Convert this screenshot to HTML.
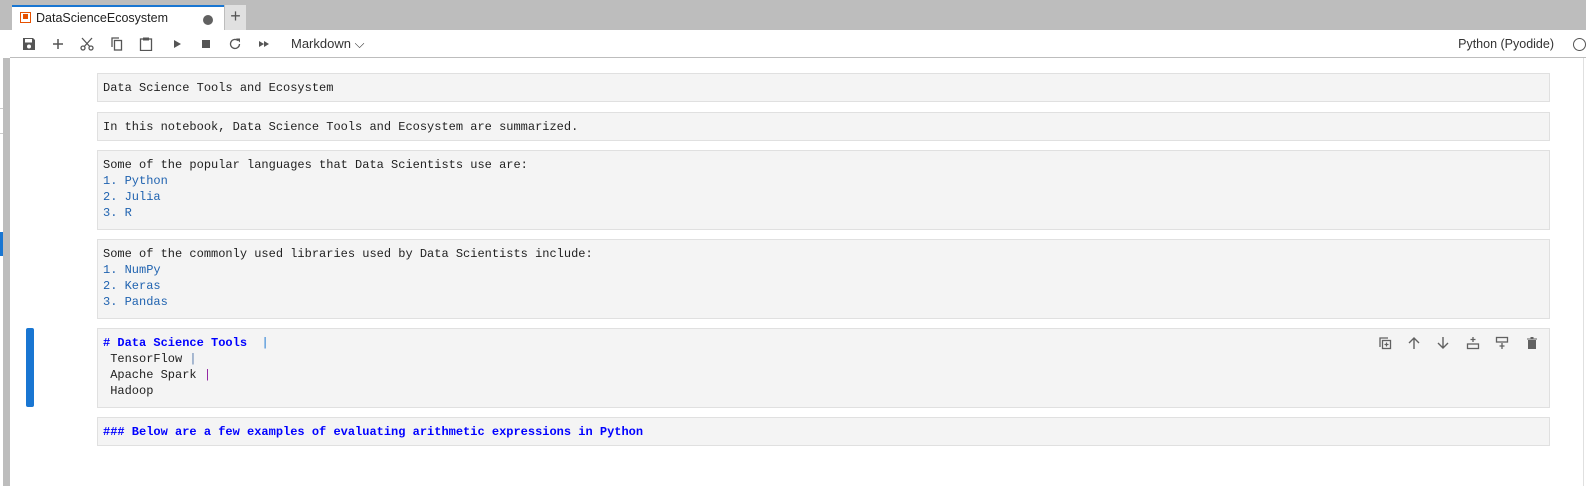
<!DOCTYPE html>
<html><head><style>
*{margin:0;padding:0;box-sizing:border-box}
body{width:1586px;height:486px;background:#fff;position:relative;overflow:hidden;font-family:"Liberation Sans",sans-serif}
.top{position:absolute;left:0;top:0;width:1586px;height:30px;background:#bdbdbd}
.tab{position:absolute;left:12px;top:5px;width:212px;height:25px;background:#fff;border-top:2px solid #1976d2;font-size:12.5px;color:#222}
.tab .t{position:absolute;left:24px;top:4px}
.tab .ic{position:absolute;left:8px;top:5px;width:11px;height:11px;border:1.5px solid #e65100}
.tab .ic:after{content:"";position:absolute;left:1.5px;top:1px;width:5px;height:5px;background:#e65100}
.tab .dot{position:absolute;left:191px;top:8px;width:10px;height:10px;border-radius:50%;background:#616161}
.plus{position:absolute;left:225px;top:5px;width:21px;height:25px;background:#e0e0e0;color:#555;font-size:18px;text-align:center;line-height:22px}
.tb{position:absolute;left:10px;top:30px;width:1576px;height:28px;background:#fff;border-bottom:1px solid #bdbdbd}
.tb svg{position:absolute;top:7px}
.md{position:absolute;left:281px;top:6px;font-size:13px;color:#333}
.ker{position:absolute;right:32px;top:7px;font-size:12.5px;color:#333}
.circ{position:absolute;right:0;top:8px;width:13px;height:13px;border:1.3px solid #555;border-radius:50%}
.lg{position:absolute;left:3px;top:58px;width:7px;height:428px;background:#bdbdbd}
.ll{position:absolute;left:0;width:3px;height:1px;background:#ccc}
.cell{position:absolute;left:97px;width:1453px;background:#f4f4f4;border:1px solid #e0e0e0;font-family:"Liberation Mono",monospace;font-size:12px;line-height:16px;color:#222;padding:6px 5px;white-space:pre}
.b{color:#2063b0}
.h{color:#0000ff;font-weight:bold}
.bar{position:absolute;left:26px;top:328px;width:8px;height:79px;background:#1976d2;border-radius:2px}
.ac svg{position:absolute;top:336px}
</style></head><body>
<div class="top"></div>
<div class="tab"><div class="ic"></div><span class="t">DataScienceEcosystem</span><div class="dot"></div></div>
<div class="plus">+</div>
<div class="tb">
<svg style="left:12px" width="14" height="14" viewBox="0 0 14 14"><path d="M1 1h10l2 2v10H1z" fill="#555"/><rect x="3" y="2" width="7" height="3.5" fill="#fff"/><circle cx="7" cy="9.5" r="2" fill="#fff"/></svg>
<svg style="left:41px" width="14" height="14" viewBox="0 0 14 14"><path d="M7 2v10M2 7h10" stroke="#555" stroke-width="1.5"/></svg>
<svg style="left:70px" width="14" height="14" viewBox="0 0 14 14"><circle cx="3" cy="11" r="2" fill="none" stroke="#555" stroke-width="1.3"/><circle cx="11" cy="11" r="2" fill="none" stroke="#555" stroke-width="1.3"/><path d="M4.3 9.5L12 1M9.7 9.5L2 1" stroke="#555" stroke-width="1.3"/></svg>
<svg style="left:100px" width="14" height="14" viewBox="0 0 14 14"><path d="M2 10V1h7" fill="none" stroke="#555" stroke-width="1.3"/><rect x="4.5" y="3.5" width="7" height="9.5" fill="none" stroke="#555" stroke-width="1.3"/></svg>
<svg style="left:129px" width="14" height="14" viewBox="0 0 14 14"><rect x="1.5" y="2" width="11" height="11.5" fill="none" stroke="#555" stroke-width="1.3"/><rect x="4" y="0.5" width="6" height="3" fill="#555"/></svg>
<svg style="left:160px" width="14" height="14" viewBox="0 0 14 14"><path d="M4 3l7 4-7 4z" fill="#555"/></svg>
<svg style="left:189px" width="14" height="14" viewBox="0 0 14 14"><rect x="3" y="3" width="8" height="8" fill="#555"/></svg>
<svg style="left:218px" width="14" height="14" viewBox="0 0 14 14"><path d="M11.5 7A4.5 4.5 0 1 1 10 3.6" fill="none" stroke="#555" stroke-width="1.3"/><path d="M8 1.5h4v4z" fill="#555"/></svg>
<svg style="left:247px" width="14" height="14" viewBox="0 0 14 14"><path d="M2 4l5 3-5 3zM7 4l5 3-5 3z" fill="#555"/></svg>
<span class="md">Markdown ⌵</span>
<span class="ker">Python (Pyodide)</span><div class="circ"></div>
</div>
<div class="lg"></div>
<div class="ll" style="top:108px"></div><div class="ll" style="top:133px"></div>
<div style="position:absolute;left:0;top:232px;width:3px;height:24px;background:#1976d2"></div>
<div style="position:absolute;left:1583px;top:58px;width:1px;height:428px;background:#e0e0e0"></div>
<div class="cell" style="top:73px;height:29px">Data Science Tools and Ecosystem</div>
<div class="cell" style="top:112px;height:29px">In this notebook, Data Science Tools and Ecosystem are summarized.</div>
<div class="cell" style="top:150px;height:80px">Some of the popular languages that Data Scientists use are:
<span class="b">1. Python
2. Julia
3. R</span></div>
<div class="cell" style="top:239px;height:80px">Some of the commonly used libraries used by Data Scientists include:
<span class="b">1. NumPy
2. Keras
3. Pandas</span></div>
<div class="cell" style="top:328px;height:80px"><span class="h"># Data Science Tools  </span><span style="color:#1976d2">|</span>
 TensorFlow <span style="color:#5577aa">|</span>
 Apache Spark <span style="color:#9020a0">|</span>
 Hadoop</div>
<div class="bar"></div>
<div class="ac">
<svg style="left:1378px" width="14" height="14" viewBox="0 0 14 14"><path d="M2 11V2h8" fill="none" stroke="#616161" stroke-width="1.3"/><rect x="4.5" y="4.5" width="8" height="8" fill="none" stroke="#616161" stroke-width="1.3"/><path d="M8.5 6.5v4M6.5 8.5h4" stroke="#616161" stroke-width="1.2"/></svg>
<svg style="left:1407px" width="14" height="14" viewBox="0 0 14 14"><path d="M7 13V2M2 7l5-5 5 5" fill="none" stroke="#616161" stroke-width="1.4"/></svg>
<svg style="left:1436px" width="14" height="14" viewBox="0 0 14 14"><path d="M7 1v11M2 7l5 5 5-5" fill="none" stroke="#616161" stroke-width="1.4"/></svg>
<svg style="left:1466px" width="14" height="14" viewBox="0 0 14 14"><rect x="1.5" y="8" width="11" height="4.5" fill="none" stroke="#616161" stroke-width="1.3"/><path d="M7 1v5M4.5 3.5h5" stroke="#616161" stroke-width="1.3"/></svg>
<svg style="left:1495px" width="14" height="14" viewBox="0 0 14 14"><rect x="1.5" y="1.5" width="11" height="4.5" fill="none" stroke="#616161" stroke-width="1.3"/><path d="M7 7v6M4.5 10h5" stroke="#616161" stroke-width="1.3"/></svg>
<svg style="left:1525px" width="14" height="14" viewBox="0 0 14 14"><path d="M3 4h8v9H3zM2 2.5h10v1H2zM5.5 1h3v1.5h-3z" fill="#616161"/></svg>
</div>
<div class="cell" style="top:417px;height:29px"><span class="h">### Below are a few examples of evaluating arithmetic expressions in Python</span></div>
</body></html>
